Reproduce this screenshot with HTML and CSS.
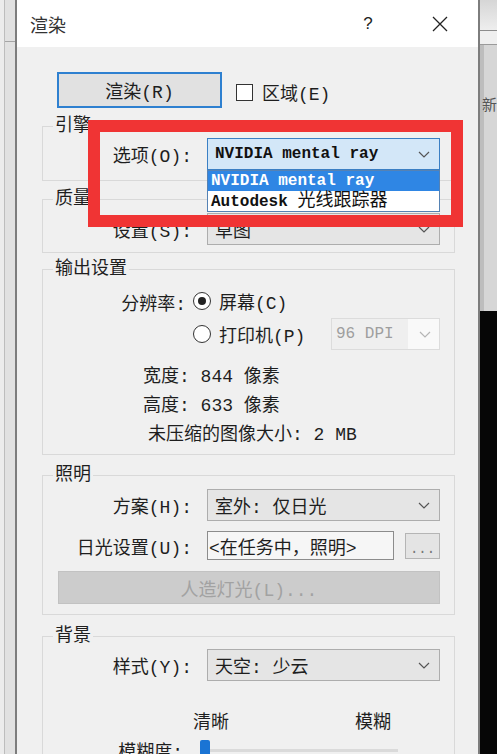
FILE: index.html
```html
<!DOCTYPE html>
<html lang="zh-CN">
<head>
  <meta charset="UTF-8">
  <title>渲染</title>
  <link rel="stylesheet" href="styles.css">
</head>
<body>
  <div class="screen">
    <div class="side side-left"><div class="side-left-inner"><div class="side-band"></div></div></div>

    <div class="dialog">
      <div class="titlebar">
        <span class="title">渲染</span>
        <span class="title-btn">?</span>
        <span class="title-btn title-close">
          <svg width="18" height="18" viewBox="0 0 18 18"><path d="M2 2 L16 16 M16 2 L2 16" stroke="#222" stroke-width="1.3" fill="none"/></svg>
        </span>
      </div>

      <div class="dialog-body">
        <div class="render-row">
          <button class="btn btn-render" type="button">渲染(R)</button>
          <span class="checkbox"></span>
          <span class="check-text">区域(E)</span>
        </div>

        <!-- engine -->
        <fieldset class="group group-engine">
          <legend>引擎</legend>
          <div class="row">
            <span class="row-label">选项(O):</span>
            <div class="combo combo-focus">
              <span class="combo-mono">NVIDIA mental ray</span>
              <svg class="chev" width="12" height="7" viewBox="0 0 12 7"><polyline points="1,1 6,6 11,1" fill="none" stroke="#555" stroke-width="1.2"/></svg>
              <ul class="combo-list">
                <li class="selected">NVIDIA mental ray</li>
                <li>Autodesk <span class="cjk">光线跟踪器</span></li>
              </ul>
            </div>
          </div>
        </fieldset>

        <!-- quality -->
        <fieldset class="group group-quality">
          <legend>质量</legend>
          <div class="row">
            <span class="row-label">设置(S):</span>
            <div class="combo">
              <span>草图</span>
              <svg class="chev" width="12" height="7" viewBox="0 0 12 7"><polyline points="1,1 6,6 11,1" fill="none" stroke="#555" stroke-width="1.2"/></svg>
            </div>
          </div>
        </fieldset>

        <!-- output -->
        <fieldset class="group group-output">
          <legend>输出设置</legend>
          <div class="res">
            <span class="res-label">分辨率:</span>
            <div class="radio-line"><span class="radio checked"></span>屏幕(C)</div>
            <span></span>
            <div class="radio-line radio-line-printer">
              <span class="radio"></span>打印机(P)
              <div class="combo combo-disabled">
                <span class="dpi">96 DPI</span>
                <svg class="chev" width="12" height="7" viewBox="0 0 12 7"><polyline points="1,1 6,6 11,1" fill="none" stroke="#b5b5b5" stroke-width="1.2"/></svg>
              </div>
            </div>
          </div>
          <p class="info info-first">宽度: 844 像素</p>
          <p class="info">高度: 633 像素</p>
          <p class="info info-size">未压缩的图像大小: 2 MB</p>
        </fieldset>

        <!-- lighting -->
        <fieldset class="group group-light">
          <legend>照明</legend>
          <div class="row">
            <span class="row-label">方案(H):</span>
            <div class="combo">
              <span>室外: 仅日光</span>
              <svg class="chev" width="12" height="7" viewBox="0 0 12 7"><polyline points="1,1 6,6 11,1" fill="none" stroke="#555" stroke-width="1.2"/></svg>
            </div>
          </div>
          <div class="row row-sun">
            <span class="row-label">日光设置(U):</span>
            <div class="sun-ctrl">
              <div class="textbox">&lt;在任务中，照明&gt;</div>
              <button class="btn btn-dots" type="button">...</button>
            </div>
          </div>
          <button class="btn btn-disabled" type="button">人造灯光(L)...</button>
        </fieldset>

        <!-- background -->
        <fieldset class="group group-bg">
          <legend>背景</legend>
          <div class="row">
            <span class="row-label">样式(Y):</span>
            <div class="combo">
              <span>天空: 少云</span>
              <svg class="chev" width="12" height="7" viewBox="0 0 12 7"><polyline points="1,1 6,6 11,1" fill="none" stroke="#555" stroke-width="1.2"/></svg>
            </div>
          </div>
          <div class="slider-labels">
            <span>清晰</span>
            <span>模糊</span>
          </div>
          <div class="slider-row">
            <span class="row-label">模糊度:</span>
            <div class="slider">
              <span class="thumb"></span>
              <span class="track"></span>
            </div>
          </div>
        </fieldset>

        <div class="highlight"></div>
      </div>
    </div>

    <div class="side side-right">
      <div class="rs-top"></div>
      <div class="rs-tab"></div>
      <div class="rs-panel"><span class="rs-text">新</span></div>
      <div class="rs-dark"></div>
    </div>
  </div>
</body>
</html>
```

FILE: styles.css
```css
* {
  box-sizing: border-box;
}

html, body {
  margin: 0;
  height: 100%;
}

body {
  font-family: "Liberation Mono", "Noto Sans CJK SC", monospace;
  font-size: 18px;
  color: #1e1e1e;
  background-color: #e0e0e0;
  overflow: hidden;
}

.screen {
  display: flex;
  height: 754px;
}

/* side strips (app behind the dialog) */
.side-left {
  width: 15px;
  background-color: #ececec;
  padding-left: 4px;
}

.side-left-inner {
  height: 100%;
  border-left: 1px solid #bdbdbd;
  background-color: #e1e1e1;
}

.side-band {
  height: 42px;
  border-bottom: 1px solid #a5a5a5;
}

.side-right {
  width: 17px;
  display: flex;
  flex-direction: column;
  overflow: hidden;
}

.rs-top {
  height: 31px;
  background: linear-gradient(#d6d6d6, #eeeeee);
  border-bottom: 1px solid #8c8c8c;
}

.rs-tab {
  height: 14px;
  background-color: #efefef;
  border-bottom: 1px solid #9a9a9a;
}

.rs-panel {
  height: 266px;
  background-color: #d6d6d6;
  border-left: 4px solid #bdbdbd;
  padding-top: 48px;
}

.rs-text {
  display: block;
  margin-left: -2px;
  font-family: "Noto Sans CJK SC", sans-serif;
  font-size: 15px;
  color: #555;
}

.rs-dark {
  flex: 1;
  background-color: #060606;
}

/* dialog */
.dialog {
  width: 465px;
  display: flex;
  flex-direction: column;
  border-left: 2px solid #7d7d7d;
  border-right: 2px solid #7d7d7d;
  background-color: #f0f0f0;
}

.titlebar {
  height: 47px;
  display: flex;
  align-items: center;
  padding-left: 13px;
  background-color: #fff;
  font-family: "Noto Sans CJK SC", sans-serif;
  font-size: 18px;
  color: #333;
}

.title {
  flex: 1;
}

.title-btn {
  width: 60px;
  height: 47px;
  display: flex;
  align-items: center;
  justify-content: center;
  font-family: "Liberation Sans", sans-serif;
  font-size: 17px;
  color: #222;
}

.title-close {
  margin-left: 12px;
  margin-right: 8px;
}

.dialog-body {
  position: relative;
  flex: 1;
  padding: 25px 23px 0 25px;
}

/* render button row */
.render-row {
  display: flex;
  align-items: center;
  height: 36px;
  margin-left: 15px;
}

.btn {
  font-family: inherit;
  font-size: 18px;
  color: #1e1e1e;
  padding: 0;
  cursor: pointer;
}

.btn-render {
  width: 165px;
  height: 36px;
  border: 2px solid #2e80d0;
  background-color: #e1e1e1;
}

.checkbox {
  width: 17px;
  height: 17px;
  margin: 4px 9px 0 14px;
  border: 1px solid #333;
  background-color: #fff;
}

.check-text {
  padding-top: 4px;
}

/* group boxes */
.group {
  margin: 0;
  padding: 0 14px 0 0;
  border: 1px solid #d9d9d9;
  min-width: 0;
}

.group legend {
  margin-left: 10px;
  padding: 0 2px;
  line-height: 20px;
}

.group-engine {
  margin-top: 8px;
  padding-top: 2px;
  padding-bottom: 10px;
}

.group-quality {
  margin-top: 8px;
  padding-top: 4px;
  padding-bottom: 7px;
}

.group-output {
  margin-top: 6px;
  padding-top: 10px;
  padding-bottom: 4px;
}

.group-light {
  margin-top: 10px;
  padding-top: 4px;
  padding-bottom: 10px;
}

.group-bg {
  margin-top: 11px;
  padding-top: 3px;
  padding-bottom: 40px;
}

.row {
  display: grid;
  grid-template-columns: 154px 233px;
  column-gap: 10px;
  align-items: center;
}

.row-label {
  text-align: right;
  padding-right: 5px;
  white-space: nowrap;
}

/* combo boxes */
.combo {
  position: relative;
  height: 32px;
  display: flex;
  align-items: center;
  justify-content: space-between;
  padding: 0 9px 0 7px;
  border: 1px solid #adadad;
  background-color: #e5e5e5;
  white-space: nowrap;
}

.combo-focus {
  border-color: #3a7fc4;
  background-color: #d3e7f8;
}

.combo-mono {
  font-size: 16px;
  font-weight: bold;
  color: #111;
}

.combo-list {
  position: absolute;
  top: 31px;
  left: -1px;
  right: -1px;
  margin: 0;
  padding: 0;
  list-style: none;
  border: 1px solid #5582b4;
  background-color: #fff;
  z-index: 2;
}

.combo-list li {
  height: 20px;
  line-height: 20px;
  padding-left: 3px;
  font-size: 16px;
  font-weight: bold;
  color: #111;
}

.combo-list li.selected {
  background-color: #2f86e4;
  color: #fff;
}

.combo-list .cjk {
  font-size: 18px;
  font-weight: normal;
}

.combo-disabled {
  width: 109px;
  height: 32px;
  margin-left: auto;
  padding: 0 8px 0 0;
  border-color: #dcdcdc;
  background-color: #f9f9f9;
}

.dpi {
  height: 100%;
  width: 76px;
  display: flex;
  align-items: center;
  padding-left: 4px;
  background-color: #efefef;
  font-size: 16px;
  color: #9e9e9e;
}

/* output settings */
.res {
  display: grid;
  grid-template-columns: 143px 1fr;
  column-gap: 7px;
  row-gap: 3px;
}

.res-label {
  text-align: right;
  align-self: center;
}

.radio-line {
  display: flex;
  align-items: center;
  height: 24px;
}

.radio-line-printer {
  height: 32px;
}

.radio {
  width: 18px;
  height: 18px;
  margin-right: 8px;
  border: 1px solid #333;
  border-radius: 50%;
  background-color: #fff;
  display: flex;
  align-items: center;
  justify-content: center;
}

.radio.checked::after {
  content: "";
  width: 8px;
  height: 8px;
  border-radius: 50%;
  background-color: #222;
}

.info {
  margin: 0;
  padding-left: 100px;
  line-height: 29px;
  white-space: pre;
}

.info-first {
  margin-top: 13px;
}

.info-size {
  padding-left: 105px;
}

/* lighting */
.row-sun {
  margin-top: 10px;
}

.sun-ctrl {
  display: flex;
  align-items: center;
  gap: 11px;
}

.textbox {
  width: 187px;
  height: 29px;
  display: flex;
  align-items: center;
  padding-left: 1px;
  border: 1px solid #8c8c8c;
  background-color: #f6f6f6;
  white-space: nowrap;
}

.btn-dots {
  width: 35px;
  height: 26px;
  border: 1px solid #b5b5b5;
  background-color: #e4e4e4;
  font-size: 14px;
  color: #777;
  line-height: 30px;
}

.btn-disabled {
  display: block;
  width: 382px;
  height: 33px;
  margin: 11px 0 0 15px;
  border: 1px solid #c2c2c2;
  background-color: #cccccc;
  color: #a2a2a2;
}

/* background blur slider */
.slider-labels {
  display: flex;
  gap: 126px;
  margin-top: 32px;
  padding-left: 150px;
  line-height: 20px;
}

.slider-row {
  display: grid;
  grid-template-columns: 145px 1fr;
  column-gap: 12px;
  align-items: center;
  margin-top: 4px;
}

.slider {
  position: relative;
  height: 20px;
  display: flex;
  align-items: center;
}

.thumb {
  width: 10px;
  height: 20px;
  border-radius: 2px;
  background-color: #1a74d4;
}

.track {
  width: 188px;
  height: 3px;
  background-color: #dadada;
}

/* red annotation frame */
.highlight {
  position: absolute;
  left: 71px;
  top: 73px;
  width: 375px;
  height: 107px;
  border: 12px solid #f03434;
  z-index: 3;
}
```
